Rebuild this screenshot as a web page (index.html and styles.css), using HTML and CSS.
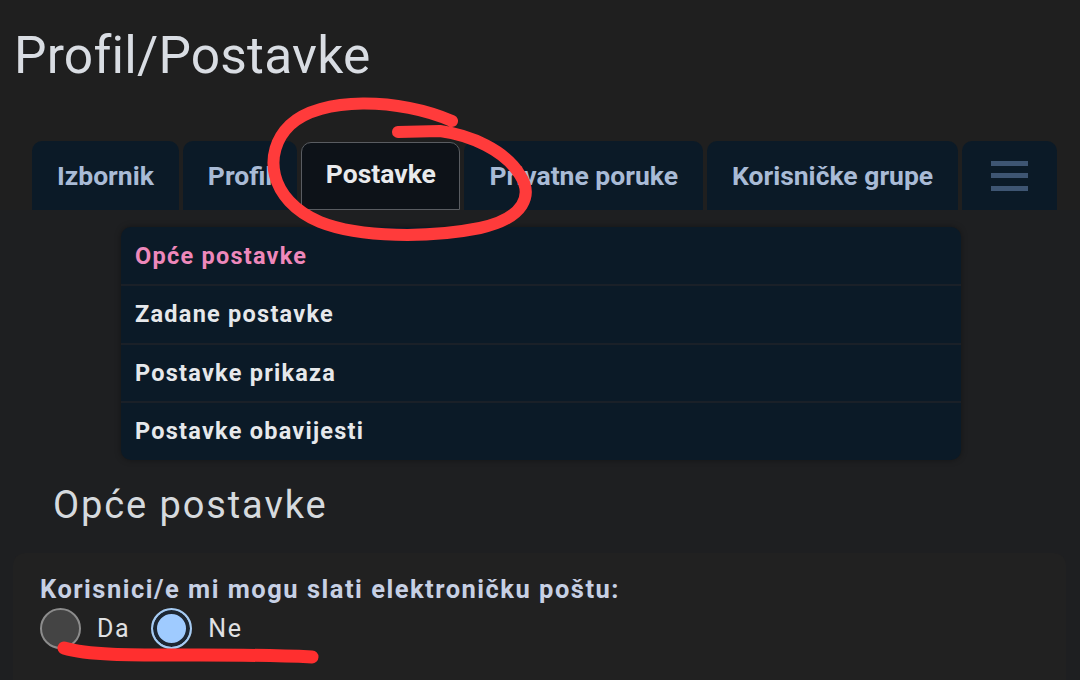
FILE: index.html
```html
<!DOCTYPE html>
<html lang="hr">
<head>
<meta charset="utf-8">
<title>Profil/Postavke</title>
<link rel="stylesheet" href="styles.css">
</head>
<body>
<div class="page">
  <h1 class="title">Profil/Postavke</h1>
  <nav class="tabbar">
    <a class="tab">Izbornik</a>
    <a class="tab">Profil</a>
    <a class="tab active">Postavke</a>
    <a class="tab">Privatne poruke</a>
    <a class="tab">Korisničke grupe</a>
    <a class="tab menu"><span class="bars"><i></i><i></i><i></i></span></a>
  </nav>
  <div class="content">
    <ul class="submenu">
      <li class="current">Opće postavke</li>
      <li>Zadane postavke</li>
      <li>Postavke prikaza</li>
      <li>Postavke obavijesti</li>
    </ul>
    <h2 class="section-title">Opće postavke</h2>
    <div class="panel">
      <div class="field-label">Korisnici/e mi mogu slati elektroničku poštu:</div>
      <div class="radios">
        <label class="radio"><span class="dot"></span><span class="rlabel">Da</span></label>
        <label class="radio"><span class="dot checked"></span><span class="rlabel">Ne</span></label>
      </div>
    </div>
  </div>
  <svg class="scribble" width="1080" height="680" viewBox="0 0 1080 680">
    <path d="M452 121 C400 98, 320 96, 290 125 C262 152, 268 200, 320 222 C360 238, 430 238, 480 228 C525 218, 533 195, 520 175 C505 150, 470 135, 440 131 L398 132" fill="none" stroke="#ff3b3b" stroke-width="12" stroke-linecap="round" stroke-linejoin="round"/>
    <path d="M64 648 C90 656, 140 655, 200 655 C250 655, 290 656, 312 657" fill="none" stroke="#ff2f2f" stroke-width="13" stroke-linecap="round"/>
  </svg>
</div>
</body>
</html>
```

FILE: styles.css
```css
* { box-sizing: border-box; }
html, body { margin: 0; padding: 0; }
body {
  background: #1f1f1f;
  font-family: Roboto, "Noto Sans", "Liberation Sans", sans-serif;
  color: #dde0e5;
}
.page {
  position: relative;
  width: 1080px;
  height: 680px;
  overflow: hidden;
}
.title {
  margin: 0;
  padding: 22px 0 0 14px;
  height: 141px;
  font-size: 51.5px;
  font-weight: 400;
  line-height: 68px;
  color: #d9dde3;
  letter-spacing: 0.2px;
}
.tabbar {
  display: flex;
  gap: 4px;
  padding-left: 32px;
  height: 69px;
}
.tab {
  display: flex;
  align-items: center;
  justify-content: center;
  padding: 0 25px;
  background: #0b1a27;
  border-radius: 10px 10px 0 0;
  font-size: 26.5px;
  font-weight: 700;
  color: #a9bbd6;
  white-space: nowrap;
}
.tab.active {
  background: #0d1218;
  border: 1.5px solid #595c61;
  color: #e9eaec;
  padding: 0 23.5px 6px;
  margin-top: 1px;
}
.tab.menu { width: 95px; padding: 0; }
.bars { display: flex; flex-direction: column; gap: 7.5px; }
.bars i { display: block; width: 37px; height: 5px; background: #3e5572; }
.content {
  background: #1e1f21;
  padding-top: 17px;
}
.submenu {
  list-style: none;
  margin: 0 0 0 121px;
  padding: 0;
  width: 840px;
  background: #0b1a27;
  border-radius: 10px;
  overflow: hidden;
  box-shadow: 0 0 6px rgba(0,0,0,0.35);
}
.submenu li {
  height: 58.5px;
  display: flex;
  align-items: center;
  padding-left: 14px;
  font-size: 23.5px;
  letter-spacing: 1.25px;
  font-weight: 700;
  color: #e6e8eb;
  border-top: 2px solid #1a2028;
}
.submenu li:first-child { border-top: none; height: 57px; }
.submenu li.current { color: #ee88bb; }
.section-title {
  margin: 0;
  padding: 20px 0 0 53px;
  height: 93px;
  font-size: 38px;
  font-weight: 400;
  letter-spacing: 1.9px;
  line-height: 50px;
  color: #d6dade;
}
.panel {
  margin-left: 13px;
  width: 1053px;
  height: 140px;
  background: #212121;
  border-radius: 12px;
  padding: 21px 0 0 27px;
}
.field-label {
  font-size: 25.5px;
  font-weight: 700;
  letter-spacing: 1.5px;
  color: #c7d0e4;
  line-height: 31px;
}
.radios {
  display: flex;
  align-items: center;
  margin-top: 3px;
}
.radio { display: flex; align-items: center; margin-right: 21px; }
.dot {
  width: 41px;
  height: 41px;
  border-radius: 50%;
  background: #444;
  border: 2px solid #8c8c8c;
}
.dot.checked {
  background: #9fcbff;
  border: 2px solid #a6cbf2;
  box-shadow: inset 0 0 0 4px #1d2733;
}
.rlabel {
  font-size: 25px;
  letter-spacing: 1.6px;
  color: #e0e1e3;
  margin-left: 16px;
}
.scribble {
  position: absolute;
  left: 0;
  top: 0;
  pointer-events: none;
}
```
